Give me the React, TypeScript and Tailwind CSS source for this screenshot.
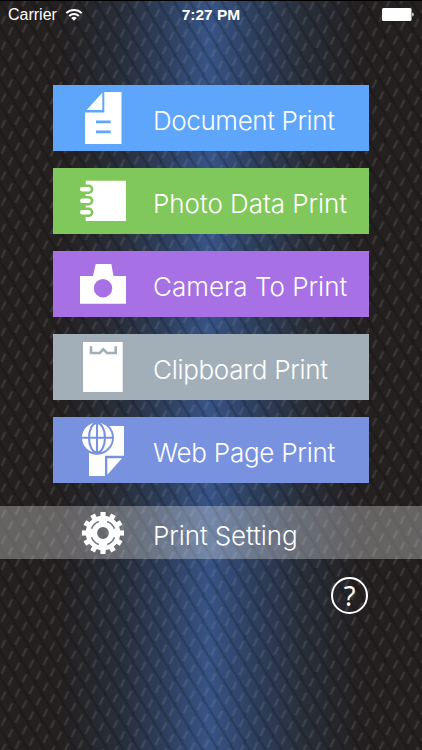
import React from 'react'

type MenuItem = {
  label: string
  color: string
  tracking: string
  icon: React.ReactNode
}

const items: MenuItem[] = [
  {
    label: 'Document Print',
    color: 'bg-[#5ea5fc]',
    tracking: 'tracking-[-0.4px]',
    icon: (
      <>
        <path d="M33.7 25 49.3 7.7V25Z" />
        <path d="M51.3 7h17.2v52H32V27.6h19.3Z" />
        <path d="M43 35.6h14.7v2.6H43zM43 45.6h14.7v2.6H43z" fill="#5ea5fc" />
      </>
    ),
  },
  {
    label: 'Photo Data Print',
    color: 'bg-[#80c85b]',
    tracking: 'tracking-[-0.05px]',
    icon: (
      <>
        <path d="M32.7 12.7H73V53H32.7z" />
        {[19, 30.5, 42].map((y) => (
          <g key={y}>
            <rect x="26" y={y - 2.4} width="14.4" height="9.3" rx="4.6" fill="#80c85b" />
            <rect x="27" y={y} width="10.8" height="4.5" rx="2.2" />
          </g>
        ))}
      </>
    ),
  },
  {
    label: 'Camera To Print',
    color: 'bg-[#a770e4]',
    tracking: 'tracking-[0px]',
    icon: (
      <>
        <path d="M27 25h13l2.7-12h15.6L60.5 25H73v27.7H27Z" />
        <circle cx="50" cy="37.3" r="9.2" fill="#a770e4" />
      </>
    ),
  },
  {
    label: 'Clipboard Print',
    color: 'bg-[#a2afb9]',
    tracking: 'tracking-[-0.3px]',
    icon: (
      <>
        <path d="M30 8h39.7v50H30z" />
        <path d="M38 12.3V19h8.7l3.6-3.6 3.7 3.6h8.7v-6.7" fill="none" stroke="#a2afb9" strokeWidth="2.6" />
      </>
    ),
  },
  {
    label: 'Web Page Print',
    color: 'bg-[#7892df]',
    tracking: 'tracking-[-0.25px]',
    icon: (
      <>
        <path d="M36 9h35v29.7H52V59H36Z" />
        <path d="M54.3 41.3H69L54.3 57.7Z" />
        <circle cx="44" cy="20.7" r="17" fill="#7892df" />
        <circle cx="44" cy="20.7" r="15" />
        <g fill="none" stroke="#7892df" strokeWidth="2.1">
          <path d="M44 5v31M29 20.7h30" />
          <ellipse cx="44" cy="20.7" rx="8" ry="14.8" />
        </g>
      </>
    ),
  },
]

// diamond mesh laid over the gradient
function Backdrop() {
  return (
    <svg className="absolute inset-0 h-full w-full" aria-hidden="true">
      <defs>
        <pattern id="mesh" width="14" height="26" patternUnits="userSpaceOnUse" patternTransform="skewY(-12)">
          <path d="M-1 -1.9 15 27.9" stroke="#000" strokeOpacity="0.2" strokeWidth="1.8" />
          <path d="M15 -1.9 -1 27.9" stroke="#000" strokeOpacity="0.1" strokeWidth="1.4" />
          <path d="M8.6 10.1 12.4 2.9M1.6 23.1 5.4 15.9" stroke="#fff" strokeOpacity="0.11" strokeWidth="2.4" />
        </pattern>
      </defs>
      <rect width="100%" height="100%" fill="url(#mesh)" />
    </svg>
  )
}

function GearIcon() {
  return (
    <svg viewBox="0 0 44 44" className="h-11 w-11" fill="#fff">
      {Array.from({ length: 12 }, (_, i) => (
        <rect key={i} x="19.4" y="1" width="5.2" height="8" transform={`rotate(${i * 30} 22 22)`} />
      ))}
      <circle cx="22" cy="22" r="11.6" fill="none" stroke="#fff" strokeWidth="11.4" />
      <circle
        cx="22"
        cy="22"
        r="12.2"
        fill="none"
        stroke="#707782"
        strokeWidth="1.5"
        pathLength="360"
        strokeDasharray="50 40"
        strokeDashoffset="-20"
      />
    </svg>
  )
}

export default function App() {
  return (
    <div className="relative h-[750px] w-[422px] overflow-hidden border-t border-black bg-[linear-gradient(90deg,#242020_0%,#242021_15%,#282e39_28%,#2e3f5d_39%,#375487_49.5%,#2e405f_60%,#282f3a_72%,#242021_85%,#242020_100%)] font-['Liberation_Sans',sans-serif] text-white">
      <Backdrop />

      <div className="relative flex h-full flex-col">
        {/* status bar */}
        <div className="flex h-7 items-center text-[16px]">
          <div className="flex flex-1 items-center gap-2 pl-2">
            <span>Carrier</span>
            <svg viewBox="0 0 18 13" className="h-[13px] w-[18px] -translate-y-px" fill="none" stroke="#fff" strokeWidth="2">
              <path d="M1.3 5.1a11 11 0 0 1 15.4 0M4.2 8a7 7 0 0 1 9.6 0" />
              <path d="M6.2 10a4 4 0 0 1 5.6 0L9 12.7Z" fill="#fff" stroke="none" />
            </svg>
          </div>
          <span className="text-[15.5px] font-bold">7:27 PM</span>
          <div className="flex flex-1 justify-end pr-2">
            <svg viewBox="0 0 32 13" className="h-[13px] w-8 -translate-y-px" fill="#fff">
              <rect x="0" y="0" width="29.5" height="13" rx="1.5" />
              <path d="M30.3 4.5c1.8.5 1.8 3.5 0 4Z" />
            </svg>
          </div>
        </div>

        <div className="mt-14 flex flex-col gap-[17px] px-[53px]">
          {items.map((item) => (
            <button key={item.label} className={`flex h-[66px] w-[316px] items-center text-left ${item.color}`}>
              <svg viewBox="0 0 100 66" className="h-[66px] w-[100px] shrink-0" fill="#fff">
                {item.icon}
              </svg>
              <span className={`mt-1 font-['Inter'] text-[26px] font-light whitespace-nowrap ${item.tracking}`}>
                {item.label}
              </span>
            </button>
          ))}
        </div>

        <button className="mt-[23px] flex h-[53px] w-full items-center bg-white/30 pl-[81px] text-left">
          <GearIcon />
          <span className="mt-1.5 ml-7 font-['Inter'] text-[26px] font-light whitespace-nowrap tracking-[-0.1px]">
            Print Setting
          </span>
        </button>

        <button className="mt-[18px] mr-[54px] flex h-[37px] w-[37px] items-center justify-center self-end rounded-full border-2 border-white font-['Noto_Sans'] text-[27px] leading-none">
          ?
        </button>
      </div>
    </div>
  )
}
